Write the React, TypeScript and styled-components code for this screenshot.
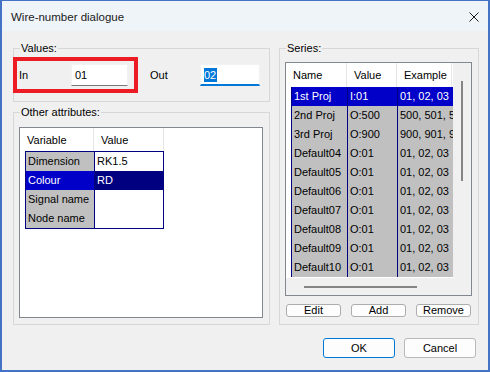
import React from 'react';
import styled, { createGlobalStyle } from 'styled-components';

const GlobalStyle = createGlobalStyle`
  html, body {
    margin: 0;
    padding: 0;
    background: #f0f0f0;
  }
  body {
    font-family: "Liberation Sans", Arial, sans-serif;
    font-size: 11px;
    color: #000;
  }
  * {
    box-sizing: border-box;
  }
`;

const Window = styled.div`
  width: 490px;
  height: 372px;
  display: flex;
  flex-direction: column;
  background: #f0f0f0;
  border: 2px solid #4472c4;
  border-top-width: 1px;
`;

const TitleBar = styled.div`
  height: 30px;
  flex: none;
  display: flex;
  align-items: center;
  justify-content: space-between;
  padding: 0 9px 0 9px;
  background: #eff4f9;
`;

const Title = styled.span`
  font-size: 11.5px;
  color: #1a1a1a;
  margin-top: 1px;
`;

const CloseIcon = styled.svg`
  width: 10px;
  height: 10px;
  margin-top: 1px;
`;

const Body = styled.div`
  display: flex;
  gap: 9px;
  height: 294px;
  padding: 10px 9px 0 11px;
  flex: none;
`;

const LeftCol = styled.div`
  width: 257px;
  flex: none;
  display: flex;
  flex-direction: column;
  gap: 3px;
`;

const Group = styled.fieldset<{ $grow?: boolean; $pt: number; $pb: number }>`
  margin: 0;
  min-width: 0;
  border: 1px solid #d7d7d7;
  padding: ${({ $pt, $pb }) => `${$pt}px 6px ${$pb}px 5px`};
  display: flex;
  flex-direction: column;
  flex: ${({ $grow }) => ($grow ? '1' : 'none')};
`;

const Legend = styled.legend`
  padding: 0 1px;
  margin-left: 1px;
  line-height: 14px;
  font-size: 11px;
`;

const ValuesRow = styled.div`
  display: flex;
  align-items: center;
`;

const Highlight = styled.div`
  width: 125px;
  height: 36px;
  margin-left: -6px;
  border: 4px solid #ed1c24;
  display: flex;
  align-items: center;
`;

const FieldLabel = styled.span<{ $w: number; $ml?: number }>`
  width: ${({ $w }) => $w}px;
  margin-left: ${({ $ml }) => $ml ?? 0}px;
  padding-left: 2px;
  flex: none;
`;

const TextBox = styled.div<{ $w: number; $focus?: boolean }>`
  width: ${({ $w }) => $w}px;
  height: 22px;
  background: #fff;
  padding: 2px 0 0 3px;
  line-height: 16px;
  border: 1px solid #f2f2f2;
  border-bottom: ${({ $focus }) => ($focus ? '2px solid #0078d7' : '1px solid #7a7a7a')};
`;

const Selected = styled.span`
  background: #0078d7;
  color: #fff;
  padding: 1px 1px 1px 0;
`;

const ListBox = styled.div`
  flex: 1;
  background: #fff;
  border: 1px solid #828790;
  display: flex;
  flex-direction: column;
  overflow: hidden;
`;

const HeaderRow = styled.div<{ $h: number }>`
  display: flex;
  height: ${({ $h }) => $h}px;
  flex: none;
`;

const HeaderCell = styled.div<{ $w: number }>`
  width: ${({ $w }) => $w}px;
  flex: none;
  display: flex;
  align-items: center;
  padding-left: 7px;
  border-right: 1px solid #e5e5e5;
  font-size: 11px;
`;

const Grid = styled.div<{ $boxed?: boolean }>`
  margin-left: 5px;
  display: flex;
  flex-direction: column;
  align-self: flex-start;
  border-left: 1px solid #000080;
  border-top: ${({ $boxed }) => ($boxed ? '1px solid #000080' : 'none')};
  border-bottom: ${({ $boxed }) => ($boxed ? '1px solid #000080' : 'none')};
`;

const GridRow = styled.div`
  display: flex;
  height: 19px;
`;

const Cell = styled.div<{ $w: number; $bg: string; $light?: boolean }>`
  width: ${({ $w }) => $w}px;
  flex: none;
  background: ${({ $bg }) => $bg};
  color: ${({ $light }) => ($light ? '#fff' : '#000')};
  border-right: 1px solid #000080;
  padding-left: 2px;
  line-height: 19px;
  white-space: nowrap;
  overflow: hidden;
`;

const SeriesBox = styled.div`
  flex: 1;
  border: 1px solid #828790;
  display: grid;
  grid-template-columns: 1fr 18px;
  grid-template-rows: 1fr 17px;
  min-height: 0;
`;

const Viewport = styled.div`
  background: #fff;
  overflow: hidden;
  display: flex;
  flex-direction: column;
`;

const VScroll = styled.div`
  background: #f0f0f0;
  display: flex;
  justify-content: center;
  padding-top: 18px;
`;

const VThumb = styled.div`
  width: 2px;
  height: 100px;
  background: #858585;
`;

const HScroll = styled.div`
  background: #f0f0f0;
  display: flex;
  align-items: center;
  padding-left: 18px;
`;

const HThumb = styled.div`
  width: 113px;
  height: 2px;
  background: #858585;
`;

const Corner = styled.div`
  background: #f0f0f0;
`;

const SmallButtons = styled.div`
  display: flex;
  justify-content: space-between;
  padding: 0 1px;
  margin-top: 8px;
`;

const SmallButton = styled.button`
  width: 55px;
  height: 13px;
  padding: 0;
  border: 1px solid #adadad;
  border-radius: 3px;
  background: #fdfdfd;
  font-family: "Liberation Sans", Arial, sans-serif;
  font-size: 11px;
  line-height: 11px;
  color: #000;
`;

const Footer = styled.div`
  display: flex;
  justify-content: flex-end;
  gap: 9px;
  padding-right: 12px;
  margin-top: 13px;
`;

const DialogButton = styled.button<{ $default?: boolean }>`
  width: 72px;
  height: 20px;
  padding: 0;
  border: 1px solid ${({ $default }) => ($default ? '#0078d7' : '#b9b9b9')};
  border-radius: 3px;
  background: #fdfdfd;
  font-family: "Liberation Sans", Arial, sans-serif;
  font-size: 11px;
  color: #000;
`;

const attributes = [
  { name: 'Dimension', value: 'RK1.5' },
  { name: 'Colour', value: 'RD', selected: true },
  { name: 'Signal name', value: '' },
  { name: 'Node name', value: '' },
];

const series = [
  ['1st Proj', 'I:01', '01, 02, 03'],
  ['2nd Proj', 'O:500', '500, 501, 502'],
  ['3rd Proj', 'O:900', '900, 901, 902'],
  ['Default04', 'O:01', '01, 02, 03'],
  ['Default05', 'O:01', '01, 02, 03'],
  ['Default06', 'O:01', '01, 02, 03'],
  ['Default07', 'O:01', '01, 02, 03'],
  ['Default08', 'O:01', '01, 02, 03'],
  ['Default09', 'O:01', '01, 02, 03'],
  ['Default10', 'O:01', '01, 02, 03'],
];

const GRAY = '#c0c0c0';
const BLUE = '#0000c8';
const NAVY = '#000080';

const App: React.FC = () => {
  return (
    <>
      <GlobalStyle />
      <Window>
        <TitleBar>
          <Title>Wire-number dialogue</Title>
          <CloseIcon viewBox="0 0 10 10">
            <path d="M0.5 0.5 L9.5 9.5 M9.5 0.5 L0.5 9.5" stroke="#1a1a1a" strokeWidth="1" fill="none" />
          </CloseIcon>
        </TitleBar>

        <Body>
          <LeftCol>
            <Group $pt={2} $pb={8}>
              <Legend>Values:</Legend>
              <ValuesRow>
                <Highlight>
                  <FieldLabel $w={54}>In</FieldLabel>
                  <TextBox $w={57}>01</TextBox>
                </Highlight>
                <FieldLabel $w={52} $ml={10}>Out</FieldLabel>
                <TextBox $w={60} $focus>
                  <Selected>02</Selected>
                </TextBox>
              </ValuesRow>
            </Group>

            <Group $grow $pt={8} $pb={6}>
              <Legend>Other attributes:</Legend>
              <ListBox>
                <HeaderRow $h={23}>
                  <HeaderCell $w={74}>Variable</HeaderCell>
                  <HeaderCell $w={70}>Value</HeaderCell>
                </HeaderRow>
                <Grid $boxed>
                  {attributes.map((a) => (
                    <GridRow key={a.name}>
                      <Cell $w={69} $bg={a.selected ? BLUE : GRAY} $light={a.selected}>
                        {a.name}
                      </Cell>
                      <Cell $w={69} $bg={a.selected ? NAVY : '#fff'} $light={a.selected}>
                        {a.value}
                      </Cell>
                    </GridRow>
                  ))}
                </Grid>
              </ListBox>
            </Group>
          </LeftCol>

          <Group $grow $pt={7} $pb={7}>
            <Legend>Series:</Legend>
            <SeriesBox>
              <Viewport>
                <HeaderRow $h={24}>
                  <HeaderCell $w={61}>Name</HeaderCell>
                  <HeaderCell $w={50}>Value</HeaderCell>
                  <HeaderCell $w={55}>Example</HeaderCell>
                </HeaderRow>
                <Grid>
                  {series.map(([name, value, example], i) => {
                    const sel = i === 0;
                    const bg = sel ? BLUE : GRAY;
                    return (
                      <GridRow key={name}>
                        <Cell $w={56} $bg={bg} $light={sel}>{name}</Cell>
                        <Cell $w={50} $bg={bg} $light={sel}>{value}</Cell>
                        <Cell $w={70} $bg={bg} $light={sel}>{example}</Cell>
                      </GridRow>
                    );
                  })}
                </Grid>
              </Viewport>
              <VScroll>
                <VThumb />
              </VScroll>
              <HScroll>
                <HThumb />
              </HScroll>
              <Corner />
            </SeriesBox>
            <SmallButtons>
              <SmallButton>Edit</SmallButton>
              <SmallButton>Add</SmallButton>
              <SmallButton>Remove</SmallButton>
            </SmallButtons>
          </Group>
        </Body>

        <Footer>
          <DialogButton $default>OK</DialogButton>
          <DialogButton>Cancel</DialogButton>
        </Footer>
      </Window>
    </>
  );
};

export default App;
